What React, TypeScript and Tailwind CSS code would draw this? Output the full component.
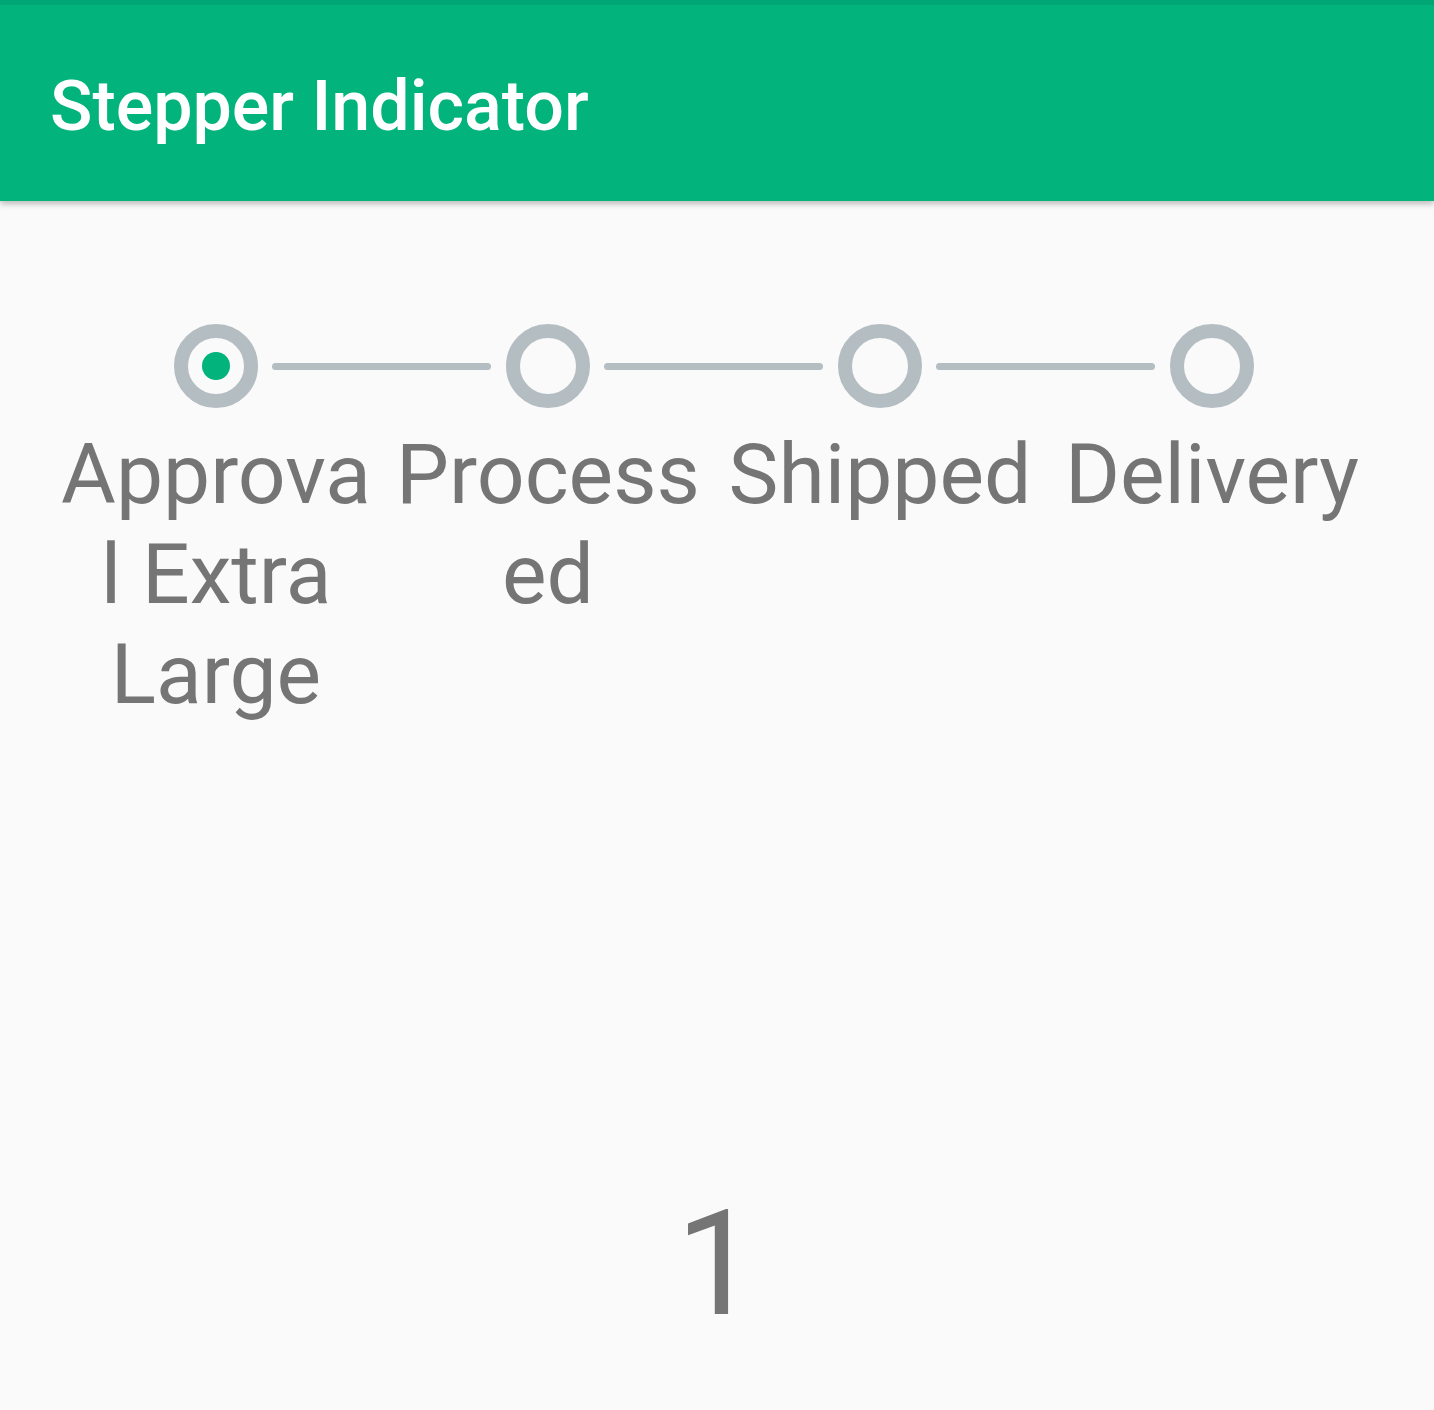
import React from "react";

const steps = ["Approval Extra Large", "Processed", "Shipped", "Delivery"];

function Circle({ active }: { active?: boolean }) {
  return (
    <div className="w-[84px] h-[84px] rounded-full border-[14px] border-[#b4bdc2] flex items-center justify-center shrink-0">
      {active && <div className="w-[28px] h-[28px] rounded-full bg-[#02b47c]" />}
    </div>
  );
}

export default function App() {
  return (
    <div className="w-[1434px] h-[1410px] bg-[#fafafa] overflow-hidden" style={{ fontFamily: "Roboto, 'Noto Sans', sans-serif" }}>
      <div className="relative z-10 shadow-[0_3px_6px_rgba(0,0,0,0.25)]">
        <div className="h-[5px] bg-[#00a673]" />
        <div className="h-[196px] bg-[#02b47c] flex items-center pl-[50px] pt-[6px]">
          <span className="text-white text-[70px] font-medium leading-none">Stepper Indicator</span>
        </div>
      </div>
      <div className="pt-[123px]">
        <div className="flex items-center pl-[174px]">
          <Circle active />
          {[0, 1, 2].map((i) => (
            <React.Fragment key={i}>
              <div className="ml-[14px] mr-[15px] w-[219px] h-[7px] rounded-full bg-[#b4bdc2]" />
              <Circle />
            </React.Fragment>
          ))}
        </div>
        <div className="grid grid-cols-[repeat(4,332px)] pl-[50px] mt-[17px]">
          {steps.map((s) => (
            <div key={s} className="px-[8px] text-center text-[84px] leading-[100px] text-[#757575] break-words">
              {s}
            </div>
          ))}
        </div>
      </div>
      <div className="mt-[466px] text-center text-[147px] leading-[147px] text-[#757575]">1</div>
    </div>
  );
}
